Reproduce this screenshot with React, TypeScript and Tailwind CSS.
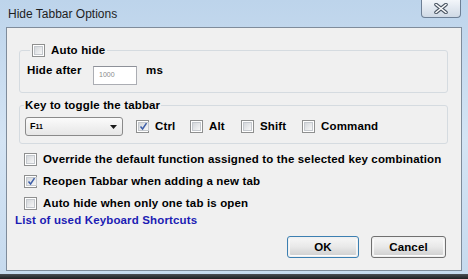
import React from 'react';

const txt = 'font-bold text-[11.5px] leading-[13px] tracking-[0.15px] text-black';

const Check: React.FC<{ checked?: boolean }> = ({ checked }) => (
  <span className="w-[13px] h-[13px] shrink-0 border border-[#8e8f8f] bg-white p-[1px] flex">
    <span className="flex-1 bg-gradient-to-br from-[#d4d7db] to-[#f7f7f7] border border-[#c4c8cd] flex items-center justify-center">
      {checked && (
        <svg width="9" height="9" viewBox="0 0 9 9">
          <path d="M1.5 4.5 L3.6 7 L7.5 1.2" fill="none" stroke="#3d5ea8" strokeWidth="1.5" />
        </svg>
      )}
    </span>
  </span>
);

const Option: React.FC<{ label: string; checked?: boolean; className?: string }> = ({ label, checked, className }) => (
  <label className={`flex items-center gap-[6px] ${className ?? ''}`}>
    <Check checked={checked} />
    <span className={txt}>{label}</span>
  </label>
);

const Button: React.FC<{ label: string; primary?: boolean; width: string }> = ({ label, primary, width }) => (
  <button
    className={`${width} h-[22px] rounded-[3px] border ${primary ? 'border-[#3c7fb1]' : 'border-[#707070]'} p-[1px] flex`}
  >
    <span className={`flex-1 rounded-[2px] border border-white/70 bg-gradient-to-b from-[#f4f4f4] via-[#e8e8e8] to-[#d2d2d2] flex items-center justify-center ${txt}`}>
      {label}
    </span>
  </button>
);

export default function App() {
  return (
    <div className="w-[468px] h-[279px] flex flex-col overflow-hidden bg-gradient-to-b from-[#bdd4eb] via-[#d4e4f4] to-[#c6daee] font-['Liberation_Sans',Arial,sans-serif]">
      {/* title bar */}
      <div className="h-[27px] flex items-start justify-between pl-[8px] pr-[7px] shrink-0">
        <span className="mt-[7px] text-[12px] leading-[14px] text-[#1e1e1e]">Hide Tabbar Options</span>
        <button className="w-[40px] h-[18px] rounded-b-[4px] border border-t-0 border-[#6d7f95] bg-gradient-to-b from-[#f3f6fa] to-[#cfd9e5] flex items-center justify-center">
          <svg width="14" height="11" viewBox="0 0 14 11">
            <path d="M2 1.5 L12 9.5 M12 1.5 L2 9.5" stroke="#4a5563" strokeWidth="3.6" strokeLinecap="round" />
            <path d="M2 1.5 L12 9.5 M12 1.5 L2 9.5" stroke="#ffffff" strokeWidth="1.6" strokeLinecap="round" />
          </svg>
        </button>
      </div>

      {/* client area */}
      <div className="mx-[6px] flex-1 border border-[#7f8c9b] bg-[#f0f0f0] flex flex-col">
        <fieldset className="mt-[16px] ml-[12px] mr-[13px] h-[49px] border border-[#d5dbe0] rounded-[3px]">
          <legend className="ml-[10px] px-[2px]">
            <Option label="Auto hide" />
          </legend>
          <div className="flex items-start pl-[7px] pt-[7px]">
            <span className={`w-[66px] ${txt}`}>Hide after</span>
            <div className="mt-[2px] w-[44px] h-[19px] border border-[#abadb3] border-t-[#8e9199] bg-white flex items-center pl-[5px]">
              <span className="text-[7px] text-[#8a8a8a]">1000</span>
            </div>
            <span className={`ml-[9px] ${txt}`}>ms</span>
          </div>
        </fieldset>

        <fieldset className="mt-[6px] ml-[12px] mr-[13px] h-[45px] border border-[#d5dbe0] rounded-[3px]">
          <legend className={`ml-[4px] px-[1px] ${txt}`}>Key to toggle the tabbar</legend>
          <div className="flex items-center pt-[5px] pl-[5px]">
            <div className="w-[98px] h-[19px] rounded-[3px] border border-[#8a8a8a] bg-gradient-to-b from-[#fbfbfb] to-[#e6e6e6] flex items-center justify-between pl-[4px] pr-[5px]">
              <span className="font-bold text-[9px] text-black">
                F<span className="text-[7px]">11</span>
              </span>
              <svg width="7" height="4" viewBox="0 0 7 4">
                <path d="M0 0 H7 L3.5 4 Z" fill="#1a1a1a" />
              </svg>
            </div>
            <Option label="Ctrl" checked className="ml-[13px] w-[54px]" />
            <Option label="Alt" className="w-[51px]" />
            <Option label="Shift" className="w-[61px]" />
            <Option label="Command" />
          </div>
        </fieldset>

        <div className="mt-[4px] ml-[17px] flex flex-col">
          <Option label="Override the default function assigned to the selected key combination" className="h-[22px]" />
          <Option label="Reopen Tabbar when adding a new tab" checked className="h-[22px]" />
          <Option label="Auto hide when only one tab is open" className="h-[22px]" />
        </div>
        <a className="ml-[8px] self-start font-bold text-[11.5px] leading-[13px] tracking-[0.15px] text-[#1c1cb4]">List of used Keyboard Shortcuts</a>

        <div className="mt-[9px] mr-[15px] flex justify-end gap-[12px]">
          <Button label="OK" primary width="w-[72px]" />
          <Button label="Cancel" width="w-[75px]" />
        </div>
      </div>

      <div className="h-[3px] shrink-0" />
      <div className="h-[5px] shrink-0 bg-gradient-to-b from-[#4a4f55] to-[#1d1f22]" />
    </div>
  );
}
